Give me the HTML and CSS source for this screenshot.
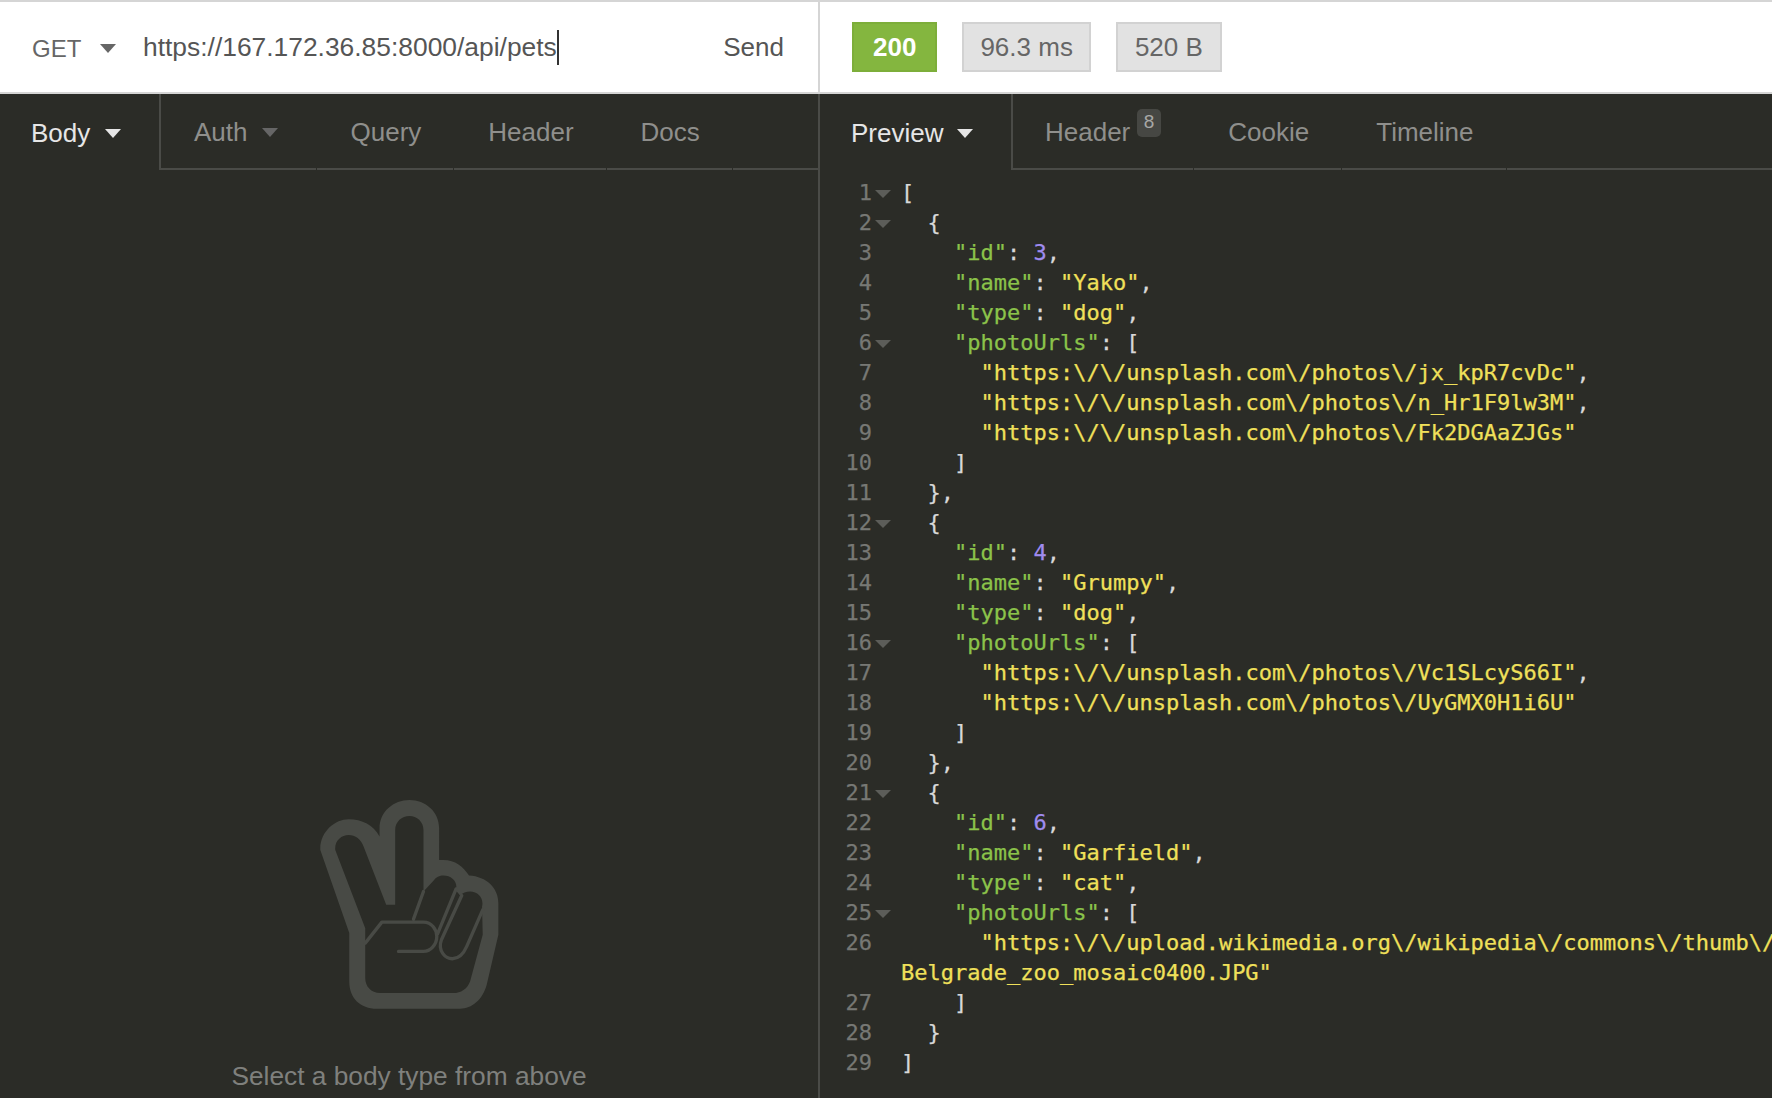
FILE: index.html
```html
<!DOCTYPE html>
<html lang="en">
<head>
    <meta charset="UTF-8">
    <meta name="viewport" content="width=device-width, initial-scale=1.0">
    <title>Insomnia</title>
    <link rel="stylesheet" href="styles.css">
</head>
<body>
    <div class="app">
        <section class="pane request-pane">
            <div class="bar url-bar">
                <span class="method">GET <i class="caret caret-dark"></i></span>
                <span class="url">https://167.172.36.85:8000/api/pets</span>
                <span class="send">Send</span>
            </div>
            <nav class="tabs">
                <span class="tab active body-tab">Body <i class="caret caret-light"></i></span>
                <span class="tab auth-tab">Auth <i class="caret caret-dim"></i></span>
                <span class="tab">Query</span>
                <span class="tab">Header</span>
                <span class="tab">Docs</span>
                <span class="tab-rest"></span>
            </nav>
            <div class="empty-state">
                <svg class="hand" viewBox="120 85 536 628" width="179" height="209">
                    <path class="hand-fill" fill-rule="evenodd" d="M120 235 C118 180 165 143 205 143 C245 143 280 160 298 195 V170 C298 120 340 85 388 85 C436 85 477 120 477 170 V265 H490 C525 265 550 285 567 312 C620 315 655 350 655 395 V490 L620 640 C608 685 575 712 540 712 H290 C240 712 207 680 207 630 V485 Z
                    M165 235 C162 208 183 190 205 190 C225 190 243 203 250 225 L318 400 H345 V175 C345 150 365 133 388 133 C410 133 430 150 430 175 V360 L460 328 C468 316 478 312 490 312 C515 312 535 332 527 356 L540 372 C548 364 558 360 570 360 C595 360 612 382 606 405 L608 490 L570 630 C562 652 542 665 520 665 H300 C272 665 255 645 255 620 V470 Z"/>
                    <path class="hand-line" d="M430 360 L400 443 M528 352 L472 488 M545 372 L484 505 C472 538 495 562 517 562 C538 562 550 548 560 525 L608 415 M255 515 L305 452 H430 C455 452 470 475 470 495 C470 520 450 540 430 540 H355"/>
                </svg>
                <p class="empty-text">Select a body type from above</p>
            </div>
        </section>

        <section class="pane response-pane">
            <div class="bar status-bar">
                <span class="badge badge-ok">200</span>
                <span class="badge badge-time">96.3 ms</span>
                <span class="badge">520 B</span>
            </div>
            <nav class="tabs">
                <span class="tab active preview-tab">Preview <i class="caret caret-light"></i></span>
                <span class="tab header-tab">Header<sup class="count">8</sup></span>
                <span class="tab">Cookie</span>
                <span class="tab">Timeline</span>
                <span class="tab-rest"></span>
            </nav>
            <div class="code">
                <div class="line"><span class="ln">1</span><i class="fold"></i><code>[</code></div>
                <div class="line"><span class="ln">2</span><i class="fold"></i><code>  {</code></div>
                <div class="line"><span class="ln">3</span><code>    <b class="key">"id"</b>: <b class="num">3</b>,</code></div>
                <div class="line"><span class="ln">4</span><code>    <b class="key">"name"</b>: <b class="str">"Yako"</b>,</code></div>
                <div class="line"><span class="ln">5</span><code>    <b class="key">"type"</b>: <b class="str">"dog"</b>,</code></div>
                <div class="line"><span class="ln">6</span><i class="fold"></i><code>    <b class="key">"photoUrls"</b>: [</code></div>
                <div class="line"><span class="ln">7</span><code>      <b class="str">"https:\/\/unsplash.com\/photos\/jx_kpR7cvDc"</b>,</code></div>
                <div class="line"><span class="ln">8</span><code>      <b class="str">"https:\/\/unsplash.com\/photos\/n_Hr1F9lw3M"</b>,</code></div>
                <div class="line"><span class="ln">9</span><code>      <b class="str">"https:\/\/unsplash.com\/photos\/Fk2DGAaZJGs"</b></code></div>
                <div class="line"><span class="ln">10</span><code>    ]</code></div>
                <div class="line"><span class="ln">11</span><code>  },</code></div>
                <div class="line"><span class="ln">12</span><i class="fold"></i><code>  {</code></div>
                <div class="line"><span class="ln">13</span><code>    <b class="key">"id"</b>: <b class="num">4</b>,</code></div>
                <div class="line"><span class="ln">14</span><code>    <b class="key">"name"</b>: <b class="str">"Grumpy"</b>,</code></div>
                <div class="line"><span class="ln">15</span><code>    <b class="key">"type"</b>: <b class="str">"dog"</b>,</code></div>
                <div class="line"><span class="ln">16</span><i class="fold"></i><code>    <b class="key">"photoUrls"</b>: [</code></div>
                <div class="line"><span class="ln">17</span><code>      <b class="str">"https:\/\/unsplash.com\/photos\/Vc1SLcyS66I"</b>,</code></div>
                <div class="line"><span class="ln">18</span><code>      <b class="str">"https:\/\/unsplash.com\/photos\/UyGMX0H1i6U"</b></code></div>
                <div class="line"><span class="ln">19</span><code>    ]</code></div>
                <div class="line"><span class="ln">20</span><code>  },</code></div>
                <div class="line"><span class="ln">21</span><i class="fold"></i><code>  {</code></div>
                <div class="line"><span class="ln">22</span><code>    <b class="key">"id"</b>: <b class="num">6</b>,</code></div>
                <div class="line"><span class="ln">23</span><code>    <b class="key">"name"</b>: <b class="str">"Garfield"</b>,</code></div>
                <div class="line"><span class="ln">24</span><code>    <b class="key">"type"</b>: <b class="str">"cat"</b>,</code></div>
                <div class="line"><span class="ln">25</span><i class="fold"></i><code>    <b class="key">"photoUrls"</b>: [</code></div>
                <div class="line"><span class="ln">26</span><code>      <b class="str">"https:\/\/upload.wikimedia.org\/wikipedia\/commons\/thumb\/
Belgrade_zoo_mosaic0400.JPG"</b></code></div>
                <div class="line"><span class="ln">27</span><code>    ]</code></div>
                <div class="line"><span class="ln">28</span><code>  }</code></div>
                <div class="line"><span class="ln">29</span><code>]</code></div>
            </div>
        </section>
    </div>
</body>
</html>
```

FILE: styles.css
```css
html, body {
    height: 100%;
}

body {
    margin: 0;
    overflow: hidden;
    font-family: "Liberation Sans", Arial, sans-serif;
    font-size: 26px;
    background: #2b2c27;
}

.app {
    display: grid;
    grid-template-columns: 820px 1fr;
    height: 100vh;
}

.pane {
    display: flex;
    flex-direction: column;
    min-width: 0;
    overflow: hidden;
}

.bar {
    box-sizing: border-box;
    height: 94px;
    flex: none;
    display: flex;
    align-items: center;
    background: #fff;
    border-top: 2px solid #d5d5d5;
    border-bottom: 2px solid #d5d5d5;
    color: #666;
}

.url-bar {
    padding-left: 32px;
    border-right: 2px solid #d5d5d5;
}

.method {
    display: flex;
    align-items: center;
    gap: 19px;
    width: 111px;
    padding-top: 3px;
    font-size: 24px;
}

.url {
    height: 35px;
    line-height: 35px;
    font-size: 26.4px;
    border-right: 2px solid #333;
    color: #555;
}

.send {
    margin-left: auto;
    margin-right: 34px;
    color: #555;
}

.status-bar {
    gap: 25px;
    padding-left: 32px;
}

.badge {
    box-sizing: border-box;
    height: 50px;
    display: flex;
    align-items: center;
    padding: 0 17px;
    background: #e2e2e2;
    border: 2px solid #d2d2d2;
    color: #666;
}

.badge-time {
    padding: 0 16px;
}

.badge-ok {
    padding: 0 19px;
    background: #84b63f;
    border-color: #7dae3a;
    color: #fff;
    font-weight: bold;
}

.caret {
    display: inline-block;
    width: 0;
    height: 0;
    border-left: 8px solid transparent;
    border-right: 8px solid transparent;
    border-top: 9px solid #666;
}

.caret-light {
    border-top-color: #e6e6e6;
}

.caret-dim {
    border-top-color: #666;
}

.tabs {
    display: flex;
    flex: none;
    height: 76px;
    box-sizing: border-box;
    color: #8f8f8c;
}

.request-pane .tabs {
    border-right: 2px solid #4a4b47;
}

.tab {
    display: flex;
    align-items: center;
    position: relative;
    padding: 2px 32px 0 34px;
    border-bottom: 2px solid #4a4b47;
    margin-right: 1px;
    white-space: nowrap;
}

.tab.active {
    padding: 2px 0 0 31px;
    border-bottom: none;
    border-right: 2px solid #4a4b47;
    margin-right: 0;
    color: #e6e6e6;
}

.body-tab {
    width: 128px;
    gap: 15px;
}

.preview-tab {
    width: 160px;
    gap: 14px;
}

.auth-tab {
    gap: 14px;
    padding-left: 33px;
    padding-right: 38px;
}

.header-tab {
    padding-left: 32px;
    padding-right: 63px;
}

.count {
    position: absolute;
    left: 124px;
    top: 15px;
    width: 24px;
    height: 28px;
    line-height: 26px;
    text-align: center;
    font-size: 19px;
    border-radius: 5px;
    background: #464743;
    color: #a8a8a6;
}

.tab-rest {
    flex: 1;
    border-bottom: 2px solid #4a4b47;
}

.empty-state {
    flex: 1;
    display: flex;
    flex-direction: column;
    align-items: center;
    padding-top: 630px;
    border-right: 2px solid #4a4b47;
}

.hand {
    flex: none;
}

.hand-fill {
    fill: #484a45;
}

.hand-line {
    fill: none;
    stroke: #484a45;
    stroke-width: 10;
    stroke-linecap: round;
    stroke-linejoin: round;
}

.empty-text {
    margin: 52px 0 0;
    font-size: 26.3px;
    white-space: nowrap;
    color: #7f807d;
}

.code {
    padding-top: 8px;
    font-family: "DejaVu Sans Mono", monospace;
    font-size: 22px;
    line-height: 30px;
    color: #d8d8d8;
    -webkit-text-stroke: 0.25px;
}

.line {
    display: flex;
    position: relative;
    padding-left: 81px;
    white-space: pre;
}

.ln {
    position: absolute;
    left: 0;
    width: 52px;
    text-align: right;
    color: #777874;
}

.fold {
    position: absolute;
    left: 55px;
    top: 12px;
    width: 0;
    height: 0;
    border-left: 8px solid transparent;
    border-right: 8px solid transparent;
    border-top: 8px solid #5c5d59;
}

code {
    font: inherit;
}

code b {
    font-weight: normal;
}

.key {
    color: #8bc34a;
}

.str {
    color: #f0e05a;
}

.num {
    color: #a08cf0;
}
```
